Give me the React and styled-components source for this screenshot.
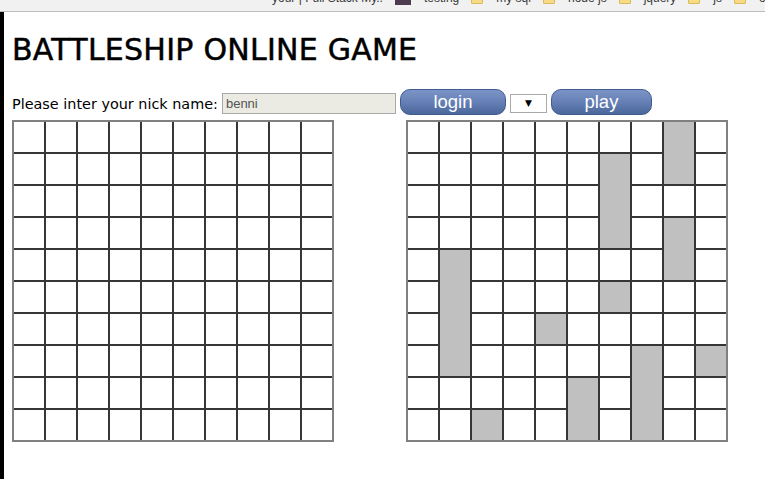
import React from "react";
import styled, { createGlobalStyle } from "styled-components";

const GlobalStyle = createGlobalStyle`
  html, body { margin: 0; padding: 0; background: #fff; }
  body { font-family: "DejaVu Sans", "Noto Sans", sans-serif; overflow: hidden; }
  #root { height: 100vh; }
`;

const Shell = styled.div`
  display: flex;
  flex-direction: column;
  height: 100vh;
`;

const BookmarkBar = styled.div`
  flex: none;
  height: 11px;
  background: #f1f1f1;
  border-bottom: 1px solid #bdbdbd;
  overflow: hidden;
  display: flex;
  align-items: flex-start;
  padding-left: 272px;
  gap: 12px;
`;

const Bookmark = styled.div`
  display: flex;
  align-items: center;
  gap: 13px;
  height: 16px;
  margin-top: -10px;
  font: 12px/16px "Liberation Sans", sans-serif;
  color: #3a3a3a;
  white-space: nowrap;
`;

const FolderIcon = styled.span`
  display: block;
  width: 12px;
  height: 11px;
  box-sizing: border-box;
  background: #f8dc85;
  border: 1px solid #d9b95c;
  border-radius: 1px;
`;

const SiteIcon = styled.span`
  display: block;
  width: 16px;
  height: 14px;
  background: #4d3b4f;
`;

const Viewport = styled.div`
  flex: 1;
  display: flex;
  min-height: 0;
`;

const EdgeStrip = styled.div`
  flex: none;
  width: 4px;
  background: #000;
`;

const Page = styled.main`
  flex: 1;
  padding: 8px;
`;

const Title = styled.h1`
  margin: 12px 0 21px;
  font: 400 30px/36px "DejaVu Sans", sans-serif;
  color: #000;
  letter-spacing: 0.25px;
  -webkit-text-stroke: 0.5px #000;
`;

const Controls = styled.div`
  display: flex;
  align-items: center;
  gap: 4px;
  height: 26px;
`;

const Label = styled.label`
  font: 400 14.4px/17px "DejaVu Sans", sans-serif;
  color: #000;
  margin-top: 4px;
`;

const NickInput = styled.input`
  box-sizing: border-box;
  width: 174px;
  height: 21px;
  margin: 3px 0 0;
  padding: 0 3px;
  background: #ebebe4;
  border: 1px solid #a9a9a9;
  font: 13px "Liberation Sans", sans-serif;
  color: #545454;
  outline: none;
`;

const PillButton = styled.button`
  box-sizing: border-box;
  width: ${(p) => p.$w}px;
  height: 26px;
  padding: 0;
  border: 1px solid #3f5c8e;
  border-radius: 10px;
  background: linear-gradient(#7c94c7, #6680b6 50%, #4a679b);
  color: #fff;
  font: 18.5px/24px "Liberation Sans", sans-serif;
  cursor: pointer;
`;

const DropBox = styled.div`
  box-sizing: border-box;
  width: 37px;
  height: 19px;
  margin-top: 2px;
  border: 1px solid #a9a9a9;
  background: #fff;
  display: flex;
  align-items: center;
  justify-content: center;
  font: 9px "DejaVu Sans", sans-serif;
  color: #000;
`;

const Boards = styled.div`
  display: flex;
  align-items: flex-start;
  gap: 72px;
  margin-top: 5px;
`;

const Board = styled.div`
  display: grid;
  grid-template-columns: repeat(10, 30px);
  grid-auto-rows: 30px;
  gap: 2px;
  background: #363636;
  border: 2px solid #808080;
`;

const Cell = styled.div`
  background: #fff;
`;

const Ship = styled.div`
  background: #c0c0c0;
  grid-column: ${(p) => p.$col + 1};
  grid-row: ${(p) => p.$row + 1} / span ${(p) => p.$len};
`;

const bookmarks = [
  { label: "your | Full Stack My..", icon: null },
  { label: "testing", icon: "site" },
  { label: "my sql", icon: "folder" },
  { label: "node js", icon: "folder" },
  { label: "jquery", icon: "folder" },
  { label: "js", icon: "folder" },
  { label: "ot", icon: "folder" },
];

const ships = [
  { col: 8, row: 0, len: 2 },
  { col: 6, row: 1, len: 3 },
  { col: 8, row: 3, len: 2 },
  { col: 6, row: 5, len: 1 },
  { col: 1, row: 4, len: 4 },
  { col: 4, row: 6, len: 1 },
  { col: 9, row: 7, len: 1 },
  { col: 7, row: 7, len: 3 },
  { col: 5, row: 8, len: 2 },
  { col: 2, row: 9, len: 1 },
];

function GameBoard({ shipList = [] }) {
  const used = shipList.reduce((s, sh) => s + sh.len, 0);
  return (
    <Board>
      {shipList.map((s, i) => (
        <Ship key={"s" + i} $col={s.col} $row={s.row} $len={s.len} />
      ))}
      {Array.from({ length: 100 - used }, (_, i) => (
        <Cell key={i} />
      ))}
    </Board>
  );
}

export default function App() {
  return (
    <>
      <GlobalStyle />
      <Shell>
        <BookmarkBar>
          {bookmarks.map((b) => (
            <Bookmark key={b.label}>
              {b.icon === "site" && <SiteIcon />}
              {b.icon === "folder" && <FolderIcon />}
              <span>{b.label}</span>
            </Bookmark>
          ))}
        </BookmarkBar>
        <Viewport>
          <EdgeStrip />
          <Page>
            <Title>BATTLESHIP ONLINE GAME</Title>
            <Controls>
              <Label>Please inter your nick name:</Label>
              <NickInput defaultValue="benni" readOnly />
              <PillButton $w={106}>login</PillButton>
              <DropBox>▼</DropBox>
              <PillButton $w={101}>play</PillButton>
            </Controls>
            <Boards>
              <GameBoard />
              <GameBoard shipList={ships} />
            </Boards>
          </Page>
        </Viewport>
      </Shell>
    </>
  );
}
